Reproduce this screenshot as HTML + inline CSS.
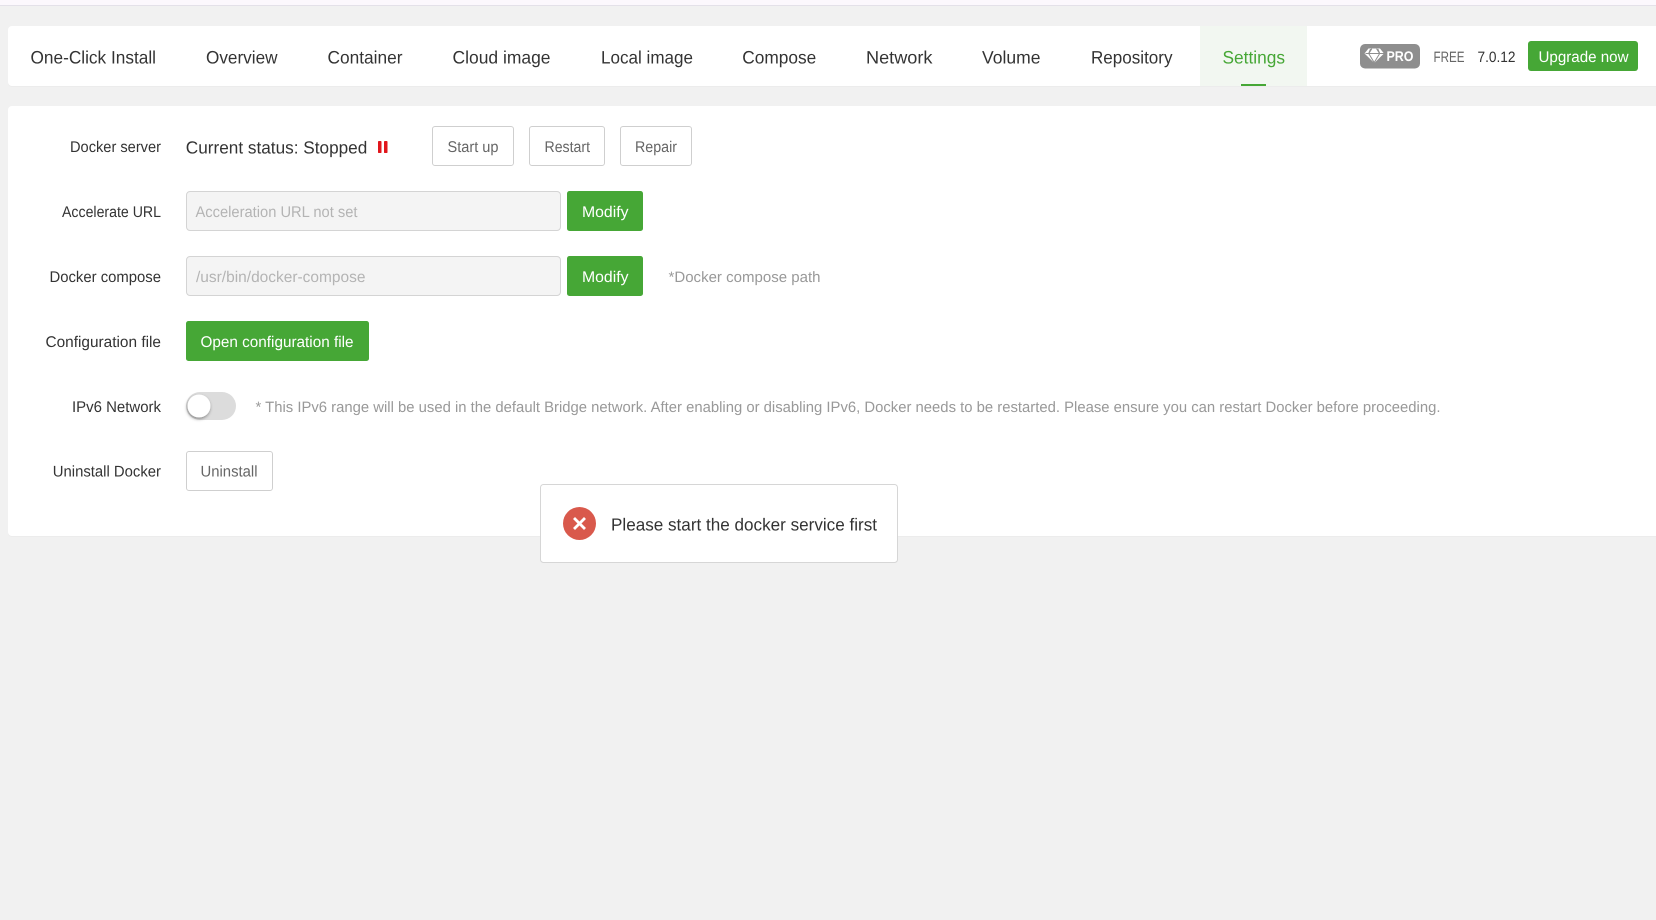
<!DOCTYPE html>
<html lang="en">
<head>
<meta charset="utf-8">
<title>Docker Settings</title>
<style>
html,body{margin:0;padding:0;background:#f1f1f1;width:1656px;height:920px;overflow:hidden}
svg{display:block}
text{font-family:"Liberation Sans",sans-serif}
.tab{font-size:18px;fill:#333}
.lb{font-size:15.5px;fill:#333}
.btn{font-size:15.5px;fill:#666}
.gt{font-size:15.5px;fill:#fff}
.ph{font-size:15.5px;fill:#b4b4b4}
.hint{font-size:15px;fill:#999}
</style>
</head>
<body>
<svg width="1656" height="920" viewBox="0 0 1656 920" xmlns="http://www.w3.org/2000/svg" text-rendering="geometricPrecision">
<defs>
<filter id="ks" x="-40%" y="-40%" width="180%" height="180%"><feDropShadow dx="-0.5" dy="1.5" stdDeviation="1.5" flood-color="#000" flood-opacity=".4"/></filter>
</defs>
<rect width="1656" height="920" fill="#f1f1f1"/>
<rect width="1656" height="5" fill="#fcf8fd"/>
<rect y="5" width="1656" height="1" fill="#e4e1e9"/>

<!-- Tab bar -->
<rect x="8" y="26.500" width="1660" height="60.500" rx="4" fill="#ececec"/>
<rect x="8" y="26" width="1660" height="60" rx="4" fill="#fff"/>
<rect x="1200" y="26" width="107" height="60" fill="#f2f7f1"/>
<rect x="1241" y="84" width="25" height="2" fill="#46a736"/>
<text class="tab" x="30.500" y="63.500" textLength="125.500" lengthAdjust="spacingAndGlyphs">One-Click Install</text>
<text class="tab" x="206" y="63.500" textLength="71.500" lengthAdjust="spacingAndGlyphs">Overview</text>
<text class="tab" x="327.500" y="63.500" textLength="75" lengthAdjust="spacingAndGlyphs">Container</text>
<text class="tab" x="452.500" y="63.500" textLength="98" lengthAdjust="spacingAndGlyphs">Cloud image</text>
<text class="tab" x="601" y="63.500" textLength="92" lengthAdjust="spacingAndGlyphs">Local image</text>
<text class="tab" x="742.300" y="63.500" textLength="74" lengthAdjust="spacingAndGlyphs">Compose</text>
<text class="tab" x="866" y="63.500" textLength="66.500" lengthAdjust="spacingAndGlyphs">Network</text>
<text class="tab" x="982" y="63.500" textLength="58.500" lengthAdjust="spacingAndGlyphs">Volume</text>
<text class="tab" x="1091" y="63.500" textLength="81.500" lengthAdjust="spacingAndGlyphs">Repository</text>
<text class="tab" x="1222.500" y="63.500" textLength="62.500" lengthAdjust="spacingAndGlyphs" style="fill:#46a736">Settings</text>

<!-- PRO badge -->
<rect x="1360" y="44" width="60" height="24.500" rx="5" fill="#8e8e8e"/>
<path d="M1368.500 48.500h11.500l4 5-9.700 9.500-9.800-9.500z" fill="#fff"/>
<path d="M1365.500 53.500h18.500M1370.500 49l-1.800 4.500 5.500 9 5.500-9-1.800-4.500M1368.800 53.500l3-4.800M1379.600 53.500l-3-4.800" stroke="#8e8e8e" stroke-width="1" fill="none"/>
<text x="1386.500" y="61" textLength="27" lengthAdjust="spacingAndGlyphs" style="font-size:14px;font-weight:700;fill:#fff">PRO</text>
<text x="1433.500" y="62" textLength="31" lengthAdjust="spacingAndGlyphs" style="font-size:15px;fill:#666">FREE</text>
<text x="1477.500" y="62" textLength="38" lengthAdjust="spacingAndGlyphs" style="font-size:15px;fill:#333">7.0.12</text>
<rect x="1528" y="41" width="110" height="30" rx="3" fill="#46a736"/>
<text class="gt" x="1538.500" y="62" textLength="90" lengthAdjust="spacingAndGlyphs">Upgrade now</text>

<!-- Main panel -->
<rect x="8" y="106.500" width="1660" height="430.500" rx="4" fill="#ececec"/>
<rect x="8" y="106" width="1660" height="430" rx="4" fill="#fff"/>

<!-- Docker server -->
<text class="lb" x="70" y="152" textLength="91" lengthAdjust="spacingAndGlyphs">Docker server</text>
<text x="185.800" y="153.500" textLength="181.500" lengthAdjust="spacingAndGlyphs" style="font-size:17.500px;fill:#333">Current status: Stopped</text>
<rect x="378" y="141" width="3.500" height="12" rx=".8" fill="#e1161c"/>
<rect x="384" y="141" width="3.500" height="12" rx=".8" fill="#e1161c"/>
<rect x="432.500" y="126.500" width="81" height="39" rx="2.500" fill="#fff" stroke="#cfcfcf"/>
<text class="btn" x="447.500" y="152" textLength="51" lengthAdjust="spacingAndGlyphs">Start up</text>
<rect x="529.500" y="126.500" width="75" height="39" rx="2.500" fill="#fff" stroke="#cfcfcf"/>
<text class="btn" x="544.500" y="152" textLength="45.500" lengthAdjust="spacingAndGlyphs">Restart</text>
<rect x="620.500" y="126.500" width="71" height="39" rx="2.500" fill="#fff" stroke="#cfcfcf"/>
<text class="btn" x="635" y="152" textLength="42" lengthAdjust="spacingAndGlyphs">Repair</text>

<!-- Accelerate URL -->
<text class="lb" x="62" y="217" textLength="99" lengthAdjust="spacingAndGlyphs">Accelerate URL</text>
<rect x="186.500" y="191.500" width="374" height="39" rx="3.500" fill="#f4f4f4" stroke="#d4d4d4"/>
<text class="ph" x="195.500" y="217" textLength="162" lengthAdjust="spacingAndGlyphs">Acceleration URL not set</text>
<rect x="567" y="191" width="76" height="40" rx="2.500" fill="#46a736"/>
<text class="gt" x="582" y="217" textLength="46.500" lengthAdjust="spacingAndGlyphs">Modify</text>

<!-- Docker compose -->
<text class="lb" x="49.500" y="282" textLength="111.500" lengthAdjust="spacingAndGlyphs">Docker compose</text>
<rect x="186.500" y="256.500" width="374" height="39" rx="3.500" fill="#f4f4f4" stroke="#d4d4d4"/>
<text class="ph" x="196" y="282" textLength="169.500" lengthAdjust="spacingAndGlyphs">/usr/bin/docker-compose</text>
<rect x="567" y="256" width="76" height="40" rx="2.500" fill="#46a736"/>
<text class="gt" x="582" y="282" textLength="46.500" lengthAdjust="spacingAndGlyphs">Modify</text>
<text class="hint" x="668.500" y="282" textLength="152" lengthAdjust="spacingAndGlyphs">*Docker compose path</text>

<!-- Configuration file -->
<text class="lb" x="45.500" y="347" textLength="115.500" lengthAdjust="spacingAndGlyphs">Configuration file</text>
<rect x="186" y="321" width="183" height="40" rx="2.500" fill="#46a736"/>
<text class="gt" x="200.500" y="347" textLength="153" lengthAdjust="spacingAndGlyphs">Open configuration file</text>

<!-- IPv6 -->
<text class="lb" x="72" y="412" textLength="89" lengthAdjust="spacingAndGlyphs">IPv6 Network</text>
<rect x="186" y="392" width="50" height="28" rx="14" fill="#dcdcdc"/>
<circle cx="199" cy="406" r="11.500" fill="#fff" filter="url(#ks)"/>
<text class="hint" x="255.500" y="412" textLength="1185" lengthAdjust="spacingAndGlyphs">* This IPv6 range will be used in the default Bridge network. After enabling or disabling IPv6, Docker needs to be restarted. Please ensure you can restart Docker before proceeding.</text>

<!-- Uninstall -->
<text class="lb" x="52.800" y="476.500" textLength="108.200" lengthAdjust="spacingAndGlyphs">Uninstall Docker</text>
<rect x="186.500" y="451.500" width="86" height="39" rx="2.500" fill="#fff" stroke="#cfcfcf"/>
<text class="btn" x="200.500" y="476.500" textLength="57" lengthAdjust="spacingAndGlyphs">Uninstall</text>

<!-- Toast -->
<rect x="540.500" y="484.500" width="357" height="78" rx="3" fill="#fff" stroke="#d6d6d6"/>
<circle cx="579.500" cy="523.500" r="16.500" fill="#d9594c"/>
<path d="M575 519l9 9M584 519l-9 9" stroke="#fff" stroke-width="2.800" stroke-linecap="square" fill="none"/>
<text x="611" y="530.500" textLength="266" lengthAdjust="spacingAndGlyphs" style="font-size:17.500px;fill:#333">Please start the docker service first</text>
</svg>
</body>
</html>
